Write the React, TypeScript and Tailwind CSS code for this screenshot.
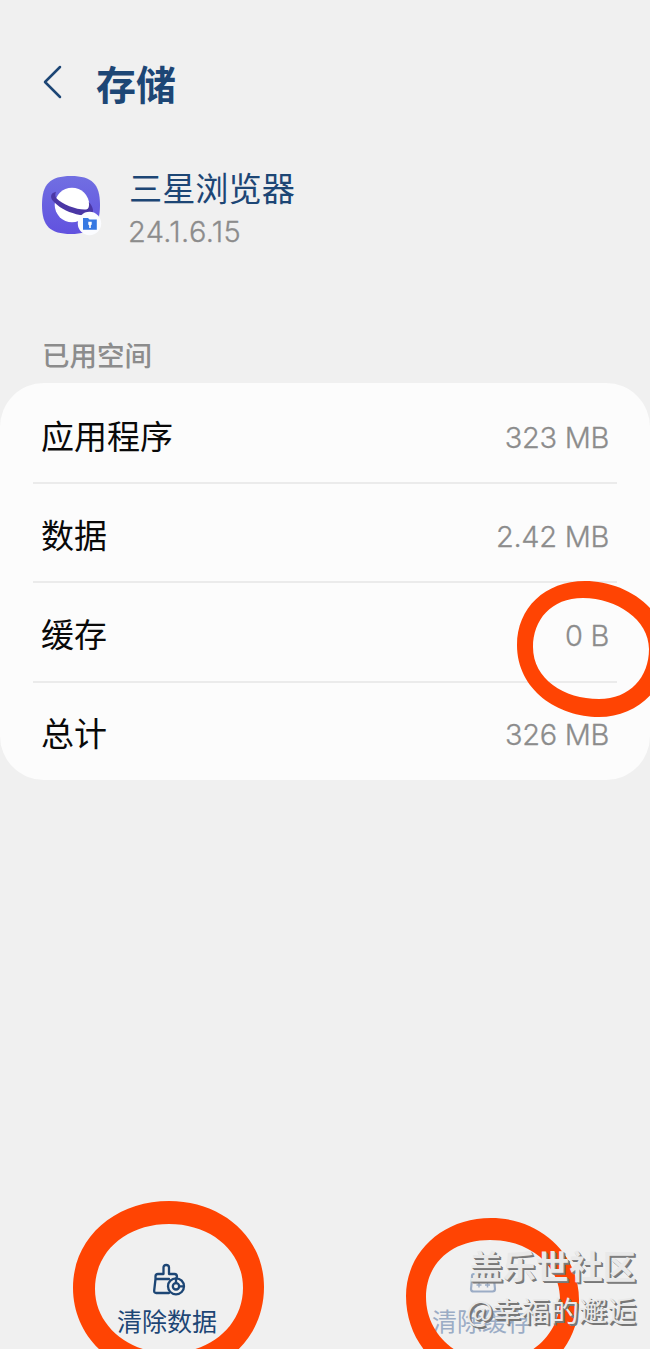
const usage = [
    { label: "应用程序", value: "323 MB" },
    { label: "数据", value: "2.42 MB" },
    { label: "缓存", value: "0 B" },
    { label: "总计", value: "326 MB" },
];

function BrowserIcon() {
    return (
        <svg width="62" height="62" viewBox="0 0 62 62" className="shrink-0">
            <defs>
                <linearGradient id="tile" x1="0" y1="0" x2="0" y2="1">
                    <stop offset="0" stopColor="#716fe2" />
                    <stop offset="1" stopColor="#6152df" />
                </linearGradient>
            </defs>
            <path
                d="M30 1C51 1 59 9 59 30S51 59 30 59S1 51 1 30S9 1 30 1Z"
                fill="url(#tile)"
            />
            <circle cx="31" cy="30" r="17.300" fill="#fff" />
            <path
                d="M15 16.700C9 18 8.500 23 13.500 27.500C20 34 29 38 39 40C48 41.500 52.500 39 52 35C51.500 32 50 29 47.800 27C48.300 31 48 34 45 34.500C38 35.500 21 29.500 15.700 23.500C14 21.500 14 19 15 16.700Z"
                fill="#4b37a5"
            />
            <circle cx="48.500" cy="48.500" r="11.700" fill="#fbfcff" />
            <path
                d="M42 43h5l1.500 1.600h7.300v10.200h-13.800z"
                fill="#3678e2"
            />
            <path d="M47.300 46.800h3.400v2.700l-.9.900v2.500h-1.600v-2.500l-.9-.9z" fill="#fff" />
        </svg>
    );
}

function BrushIcon() {
    return (
        <svg
            width="34"
            height="34"
            viewBox="0 0 34 34"
            fill="none"
            stroke="#1d4675"
            strokeWidth="2.300"
            strokeLinejoin="round"
            strokeLinecap="round"
        >
            <path d="M17 30H4.200Q2 30 2.200 27.500L3.500 16V13.500Q3.500 11 6 11H11.500V4.500Q11.500 2 14.200 2T17 4.500V11H22.500Q25 11 25 14M3.500 16H17" />
            <circle cx="24" cy="23.300" r="8" />
            <circle cx="24" cy="23.300" r="3.200" />
            <path d="M24 15.500V20M27 23.300H31.500" />
        </svg>
    );
}

function CacheIcon() {
    return (
        <svg
            width="34"
            height="34"
            viewBox="0 0 34 34"
            fill="none"
            stroke="#9bacc5"
            strokeWidth="2.200"
            strokeLinejoin="round"
        >
            <path d="M14 11V4Q14 2 17 2T20 4V11M6 16V13Q6 11 8 11H26Q28 11 28 13V16M6 16H28L29 26Q29 28.500 26.500 28.500H7.500Q5 28.500 5 26Z" />
            <path d="M13 19.500v5M10.500 22h5M21.500 19.500v5M19 22h5" strokeWidth="1.500" />
        </svg>
    );
}

// Hand-drawn marker rings over the screen
function Markers() {
    return (
        <svg
            width="650"
            height="1349"
            viewBox="0 0 650 1349"
            fill="#ff4403"
            fillRule="evenodd"
            className="pointer-events-none absolute top-0 left-0"
        >
            <path d="M585 581C623 581 667 606 667 651C667 690 636 717 599 717C558 717 517 690 517 645C517 608 545 581 585 581ZM583 598C551 598 533 620 533 647C533 679 564 699 599 699C630 699 649 677 649 649C649 620 617 598 583 598Z" />
            <path d="M169 1201C222 1201 264 1237 264 1287C264 1338 224 1376 169 1376C114 1376 73 1337 73 1288C73 1236 117 1201 169 1201ZM169 1224C128 1224 95 1250 95 1289C95 1325 128 1353 169 1353C211 1353 243 1325 243 1288C243 1250 210 1224 169 1224Z" />
            <path d="M491 1218C540 1218 579 1254 579 1300C579 1349 541 1383 493 1383C444 1383 406 1345 406 1296C406 1252 443 1218 491 1218ZM490 1240C452 1240 426 1263 426 1297C426 1333 456 1361 493 1361C532 1361 560 1333 560 1299C560 1265 529 1240 490 1240Z" />
        </svg>
    );
}

export default function App() {
    return (
        <div className="relative flex h-[1349px] w-[650px] flex-col overflow-hidden bg-[#f0f0f0] font-['Inter','Noto_Sans_CJK_SC',sans-serif]">
            <header className="mt-[54px] flex h-[60px] items-center pl-[42px] text-[#1d4675]">
                <svg
                    width="22"
                    height="36"
                    viewBox="0 0 22 36"
                    fill="none"
                    stroke="currentColor"
                    strokeWidth="2.500"
                    strokeLinecap="round"
                    strokeLinejoin="round"
                    className="mb-1"
                >
                    <path d="M18 3L3 18L18 33" />
                </svg>
                <h1 className="mt-[4px] ml-[32px] text-[40px] leading-[60px] font-bold">存储</h1>
            </header>

            <section className="mt-[55px] flex h-[80px] items-start pl-[41px]">
                <div className="pt-[6px]">
                    <BrowserIcon />
                </div>
                <div className="ml-[26px]">
                    <h2 className="text-[33.200px] leading-[40px] text-[#1d4675]">三星浏览器</h2>
                    <p className="mt-[5px] -ml-px text-[29px] leading-[36px] font-light tracking-[0.350px] text-[#8c8c8c] [-webkit-text-stroke:0.3px_#8c8c8c]">
                        24.1.6.15
                    </p>
                </div>
            </section>

            <h3 className="mt-[87px] h-[47px] pl-[42px] text-[27.500px] leading-[40px] font-medium text-[#8c8c8c]">
                已用空间
            </h3>

            <ul className="h-[397px] rounded-[44px] bg-[#fcfcfc] px-[33px] pt-[2px]">
                {usage.map((row) => (
                    <li
                        key={row.label}
                        className="flex h-[99.200px] items-center justify-between border-b-2 border-[#ebebeb] pt-[8px] pr-[8px] pb-[2px] pl-[8px] last:border-transparent"
                    >
                        <span className="text-[33px] leading-[48px] text-[#090909]">{row.label}</span>
                        <span className="mt-[2px] text-[29px] leading-[40px] font-light tracking-[-0.300px] text-[#8c8c8c] [-webkit-text-stroke:0.3px_#8c8c8c]">
                            {row.value}
                        </span>
                    </li>
                ))}
            </ul>

            <footer className="mt-auto mb-[9px] flex justify-between pr-[118px] pl-[117px] text-[25px] leading-[36px] text-[#1d4675]">
                <button className="flex flex-col items-center">
                    <span className="mb-[7px] ml-[4px]">
                        <BrushIcon />
                    </span>
                    清除数据
                </button>
                <button className="flex flex-col items-center text-[#9bacc5]">
                    <span className="mb-[7px] ml-[2px]">
                        <CacheIcon />
                    </span>
                    清除缓存
                </button>
            </footer>

            <Markers />

            <div className="absolute right-[14px] bottom-[18px] text-right font-['Noto_Sans_CJK_SC',sans-serif] whitespace-nowrap text-[#e9e9e9]">
                <p className="text-[33.300px] leading-[44px] font-bold [text-shadow:1px_1px_0_#808080,2px_2px_0_#777]">
                    盖乐世社区
                </p>
                <p className="mt-px text-[28.600px] leading-[43px] [text-shadow:1px_1px_0_#777,2px_2px_0_#777]">
                    @幸福的邂逅
                </p>
            </div>
        </div>
    );
}
